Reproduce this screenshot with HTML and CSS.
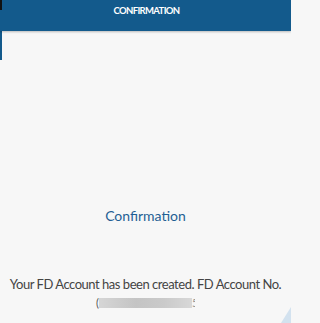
FILE: index.html
```html
<!DOCTYPE html>
<html>
<head>
<meta charset="utf-8">
<link rel="stylesheet" href="styles.css">
</head>
<body>
<div class="app">
  <header class="topbar">
    <span class="corner-mark"></span>
    <h1 class="topbar-title">CONFIRMATION</h1>
  </header>
  <main class="content">
    <span class="edge-mark"></span>
    <h2 class="title">Confirmation</h2>
    <p class="message">Your FD Account has been created. FD Account No.</p>
    <div class="account-row"><span class="paren">(</span><span class="redacted"></span><span class="tail">5</span></div>
    <span class="fold"></span>
  </main>
</div>
</body>
</html>
```

FILE: styles.css
```css
html, body {
  margin: 0;
  padding: 0;
  background: #f7f7f7;
  font-family: "Lato", "Noto Sans", sans-serif;
}
.app {
  width: 291px;
  height: 323px;
  overflow: hidden;
  display: flex;
  flex-direction: column;
}
.topbar {
  position: relative;
  height: 31px;
  flex: none;
  background: #135a8c;
  box-shadow: 0 1px 2px rgba(0,0,0,0.25);
  display: flex;
  justify-content: center;
  z-index: 1;
}
.corner-mark {
  position: absolute;
  left: 0;
  top: 0;
  width: 2px;
  height: 10px;
  background: #111;
}
.topbar-title {
  margin: 4px 0 0 2px;
  font-size: 9.5px;
  font-weight: 700;
  letter-spacing: -0.65px;
  color: #fff;
  line-height: 14px;
}
.content {
  position: relative;
  flex: 1;
  display: flex;
  flex-direction: column;
  align-items: center;
}
.edge-mark {
  position: absolute;
  left: 0;
  top: 0;
  width: 2px;
  height: 29px;
  background: #135a8c;
}
.title {
  margin: 175px 0 0;
  font-size: 14px;
  font-weight: 400;
  color: #1f5f94;
  line-height: 20px;
}
.message {
  margin: 49px 0 0;
  font-size: 13px;
  letter-spacing: -0.47px;
  color: #444;
  line-height: 19px;
  white-space: nowrap;
}
.account-row {
  display: flex;
  align-items: center;
  height: 14px;
  margin-top: 2px;
}
.paren {
  font-size: 11px;
  color: #555;
  line-height: 12px;
}
.redacted {
  width: 93px;
  height: 10px;
  background: linear-gradient(90deg, #d6d6d6, #c4c4c4 40%, #cacaca 70%, #d8d8d8);
}
.tail {
  font-size: 11px;
  color: #999;
  line-height: 12px;
  width: 3px;
  overflow: hidden;
}
.fold {
  position: absolute;
  right: 0;
  bottom: 0;
  width: 0;
  height: 0;
  border-left: 10px solid transparent;
  border-bottom: 16px solid #d3e2ef;
}
```
